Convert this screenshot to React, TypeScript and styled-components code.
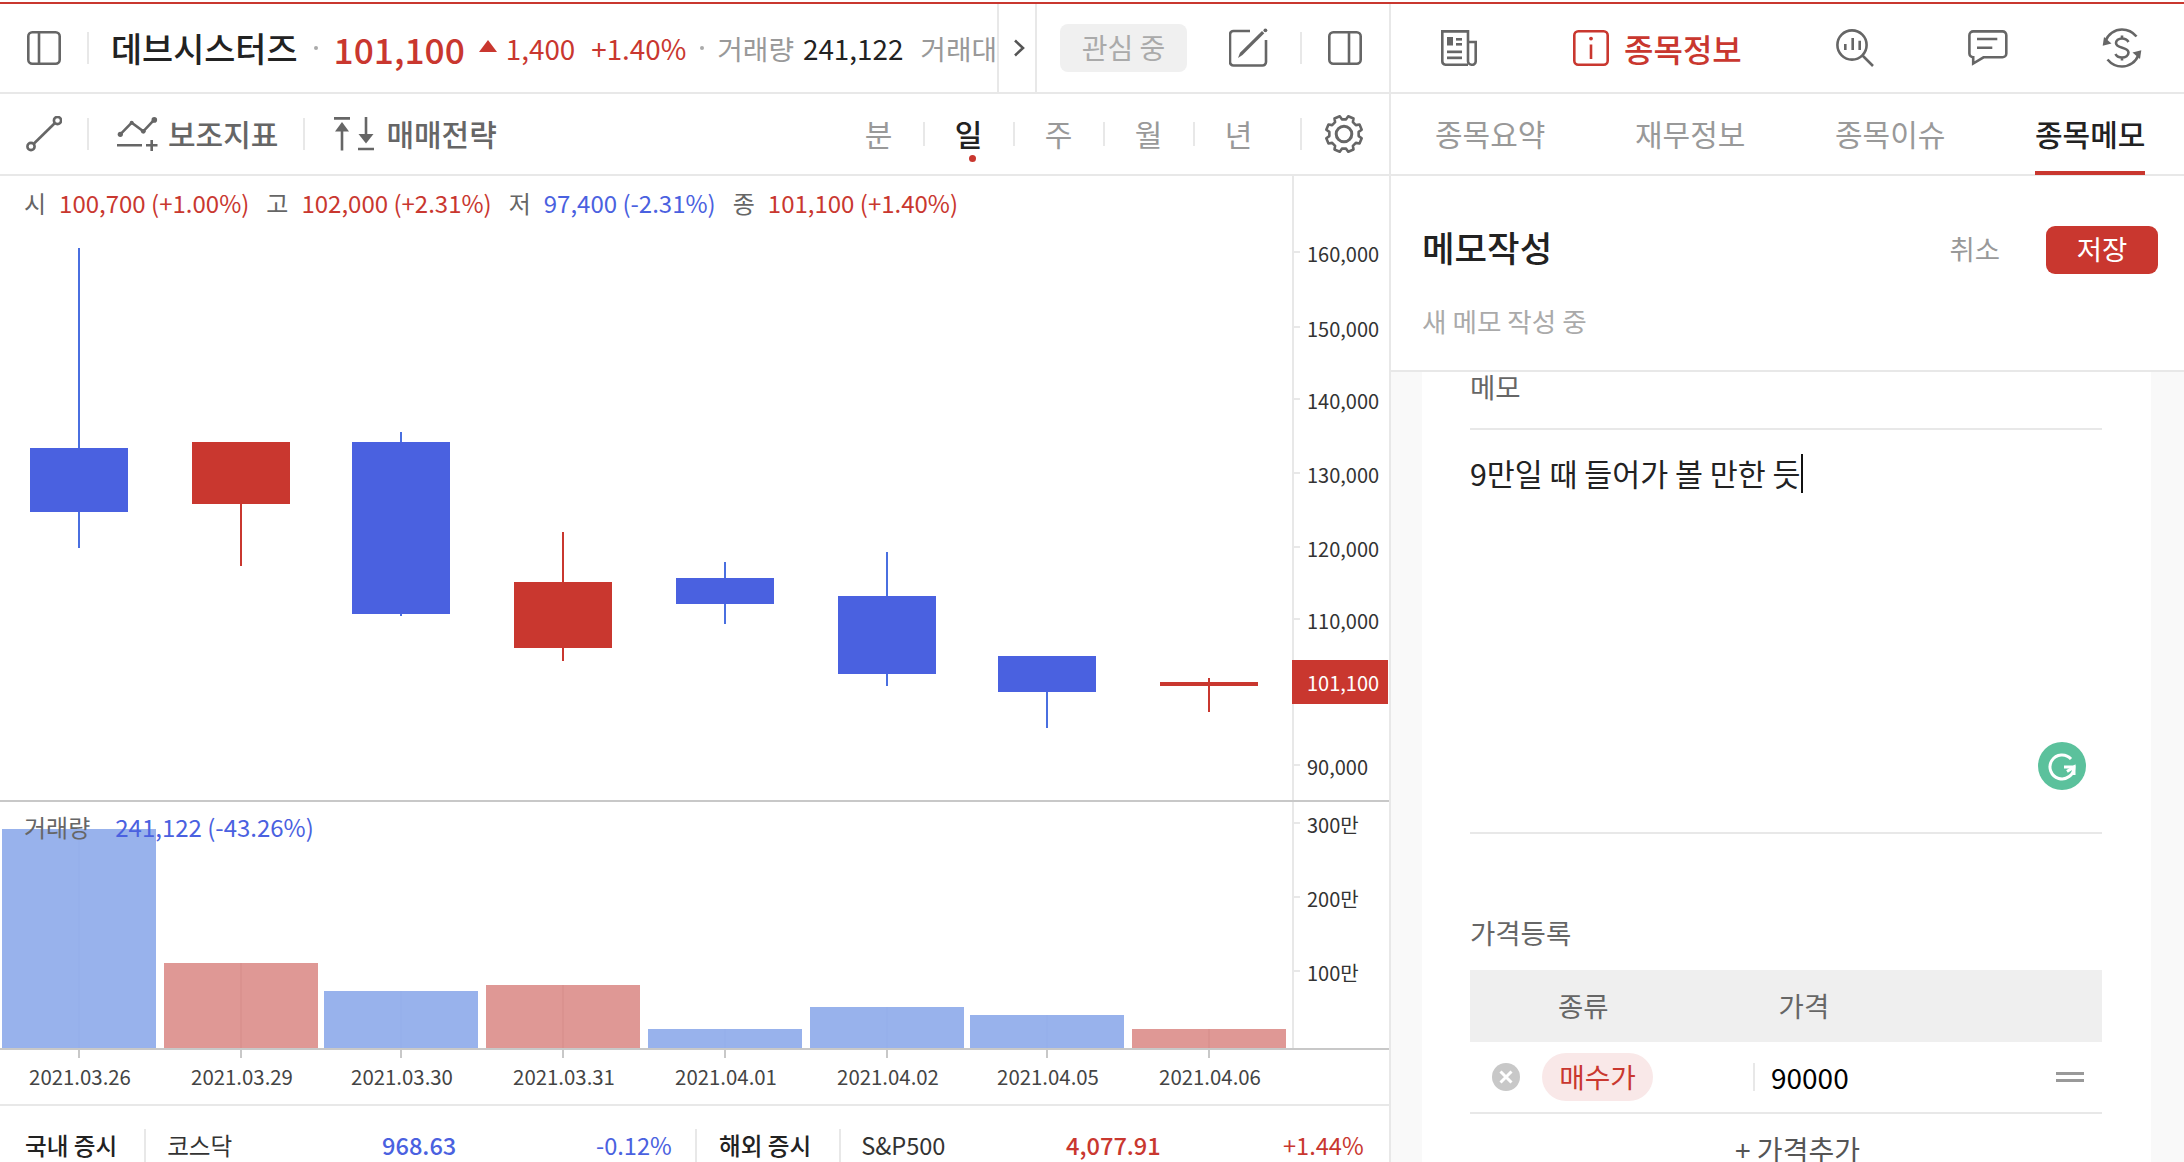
import React from 'react';
import styled, { createGlobalStyle } from 'styled-components';

const RED = '#c9372f';
const BLUE = '#4a61e0';
const LINE = '#e8e8e8';
const ICON = '#666';

const Global = createGlobalStyle`
  html, body { margin: 0; padding: 0; background: #fff; }
  body { font-family: "Noto Sans CJK KR", "Noto Sans", sans-serif; color: #222; }
  * { box-sizing: border-box; }
`;

const Page = styled.div`
  width: 2184px; height: 1162px; overflow: hidden; display: flex; flex-direction: column; padding-top: 2px; background: #fff;
`;
const RedStrip = styled.div`height: 2px; background: ${RED}; flex: none;`;
const Body = styled.div`flex: 1; display: flex; min-height: 0;`;
const LeftPanel = styled.section`
  width: 1391px; flex: none; border-right: 2px solid ${LINE}; display: flex; flex-direction: column;
`;
const RightPanel = styled.section`flex: 1; display: flex; flex-direction: column; min-width: 0;`;

const Bar = styled.div<{ $h: number }>`
  height: ${p => p.$h}px; flex: none; display: flex; align-items: center; border-bottom: 2px solid ${LINE};
`;
const VLine = styled.span<{ $ml?: number; $h?: number }>`
  flex: none; width: 2px; height: ${p => p.$h ?? 32}px; background: ${LINE}; margin-left: ${p => p.$ml ?? 0}px;
`;
const IconSvg = styled.svg<{ $ml?: number; $mr?: number; $c?: string }>`
  flex: none; display: block; margin-left: ${p => p.$ml ?? 0}px; margin-right: ${p => p.$mr ?? 0}px; fill: none;
  stroke: ${p => p.$c ?? ICON}; stroke-width: 2.6;
`;

/* ticker */
const Ticker = styled.div`
  width: 997px; height: 100%; flex: none; display: flex; align-items: center; overflow: hidden; white-space: nowrap;
`;
const StockName = styled.span`font-size: 33.8px; font-weight: 500; color: #222; margin-left: 22px; margin-top: -2px;`;
const Dot = styled.span<{ $ml: number }>`
  flex: none; width: 4px; height: 4px; border-radius: 50%; background: #aaa; margin-left: ${p => p.$ml}px;
`;
const Price = styled.span`font-size: 35.3px; font-weight: 500; color: ${RED}; margin-left: 16px;`;
const Tri = styled.span`
  flex: none; width: 0; height: 0; margin-left: 14px; margin-top: -4px;
  border-left: 9px solid transparent; border-right: 9px solid transparent; border-bottom: 12px solid ${RED};
`;
const TickerVal = styled.span<{ $ml: number; $c: string }>`
  font-size: 27.8px; color: ${p => p.$c}; margin-left: ${p => p.$ml}px;
`;
const ChevronCell = styled.div`
  width: 40px; height: 100%; flex: none; display: flex; align-items: center; justify-content: center; padding-left: 4px;
  border-left: 2px solid ${LINE}; border-right: 2px solid ${LINE};
`;
const WatchButton = styled.button`
  flex: none; width: 127px; height: 48px; margin-left: 23px; border: 0; border-radius: 8px; background: #f0f0f0;
  color: #aaa; font: inherit; font-size: 28px; padding: 0 0 2px; display: flex; align-items: center; justify-content: center;
`;

/* toolbar */
const ToolLabel = styled.span<{ $ml: number }>`
  font-size: 30px; font-weight: 500; color: #666; margin-left: ${p => p.$ml}px; margin-top: -2px; white-space: nowrap;
`;
const Periods = styled.div`display: flex; align-items: center; margin-left: auto;`;
const Period = styled.div<{ $on?: boolean; $last?: boolean }>`
  position: relative; width: 90px; height: 40px; display: flex; align-items: center; justify-content: center;
  font-size: 30px; padding-bottom: 2px; font-weight: ${p => (p.$on ? 500 : 400)}; color: ${p => (p.$on ? '#222' : '#999')};
  &::before {
    content: ''; display: ${p => (p.$last ? 'none' : 'block')}; position: absolute; right: -1px; top: 8px; width: 2px; height: 24px; background: ${LINE};
  }
  &::after {
    content: ''; display: ${p => (p.$on ? 'block' : 'none')}; position: absolute; left: 45px; bottom: -8px; width: 7px; height: 7px; border-radius: 50%; background: ${RED};
  }
`;

/* chart */
const ChartArea = styled.div`position: relative; flex: none; height: 930px;`;
const ChartSvg = styled.svg`
  display: block; font-family: "Noto Sans CJK KR", "Noto Sans", sans-serif;
`;
const Legend = styled.div<{ $top: number }>`
  position: absolute; left: 24px; top: ${p => p.$top}px; display: flex; align-items: center; height: 32px; font-size: 24px; white-space: nowrap;
`;
const LegendKey = styled.span<{ $ml?: number }>`color: #666; margin-left: ${p => p.$ml ?? 0}px;`;
const LegendVal = styled.span<{ $c: string; $ml?: number }>`color: ${p => p.$c}; margin-left: ${p => p.$ml ?? 13}px;`;

/* index footer */
const Footer = styled.div`
  flex: 1; position: relative; display: flex; align-items: flex-start; padding-top: 23px; font-size: 23.6px; line-height: 33px; white-space: nowrap; min-height: 0; overflow: hidden;
`;
const MarketCell = styled.div<{ $w: number }>`
  width: ${p => p.$w}px; flex: none; display: flex; align-items: center; height: 33px; position: relative;
`;
const MarketTitle = styled.span<{ $ml: number }>`font-weight: 500; color: #222; margin-left: ${p => p.$ml}px;`;
const MarketName = styled.span<{ $ml: number }>`color: #333; margin-left: ${p => p.$ml}px;`;
const MarketVal = styled.span<{ $c: string; $x: number; $b?: boolean }>`
  position: absolute; left: ${p => p.$x}px; color: ${p => p.$c}; font-weight: ${p => (p.$b ? 500 : 400)};
`;
const FootLine = styled.span<{ $x: number }>`
  position: absolute; left: ${p => p.$x}px; top: 0; bottom: -40px; width: 2px; background: ${LINE};
`;

/* right */
const MainTabs = styled.div`display: flex; align-items: center; gap: 94px; padding-left: 50px; height: 100%; width: 100%;`;
const ActiveMain = styled.div`display: flex; align-items: center; gap: 15px; color: ${RED}; font-size: 32px; font-weight: 500;`;
const SubTabs = styled.div`display: flex; gap: 89.6px; padding-left: 44px; height: 100%; width: 100%;`;
const SubTab = styled.div<{ $on?: boolean }>`
  position: relative; height: 100%; display: flex; align-items: center; font-size: 30px; padding-bottom: 2px; font-weight: ${p => (p.$on ? 500 : 400)};
  color: ${p => (p.$on ? '#222' : '#999')};
  &::after {
    content: ''; display: ${p => (p.$on ? 'block' : 'none')}; position: absolute; left: 0; right: 0; bottom: -1px; height: 4px; background: ${RED};
  }
`;
const MemoHead = styled.header`
  height: 196px; flex: none; border-bottom: 2px solid ${LINE}; padding: 48px 26px 0 31px; display: flex; flex-direction: column;
`;
const MemoTop = styled.div`display: flex; align-items: center; height: 52px;`;
const MemoTitle = styled.h2`margin: -8px 0 0; font-size: 35.4px; font-weight: 500; color: #222;`;
const CancelBtn = styled.button`
  margin-left: auto; border: 0; background: none; padding: 0 0 5px; font: inherit; font-size: 27.5px; color: #999;
`;
const SaveBtn = styled.button`
  margin-left: 46px; width: 112px; height: 48px; border: 0; border-radius: 9px; background: ${RED}; color: #fff;
  font: inherit; font-size: 27.5px; padding: 0 0 4px;
`;
const MemoSub = styled.div`margin-top: 27px; font-size: 26.6px; color: #aaa; line-height: 36px;`;
const Gutter = styled.div`flex: 1; min-height: 0; background: #f9f9f9; padding: 0 33px 0 31px; display: flex; position: relative;`;
const Card = styled.div`flex: 1; background: #fff; padding: 0 49px 0 48px; overflow: hidden;`;
const FieldLabel = styled.div`font-size: 27.5px; line-height: 30px; color: #666; margin-top: -1px;`;
const MemoLabelRow = styled.div`height: 58px; border-bottom: 2px solid ${LINE}; padding-top: 0.1px;`;
const EditBox = styled.div`
  position: relative; height: 404px; padding-top: 23px; border-bottom: 2px solid ${LINE}; font-size: 30.4px; line-height: 40px; color: #222; white-space: nowrap;
`;
const Caret = styled.span`
  display: inline-block; width: 2px; height: 39px; margin-top: 1px; background: #111; vertical-align: top;
`;
const GrammarlyBadge = styled.svg`position: absolute; right: 16px; bottom: 42px; display: block;`;
const PriceSection = styled.div`margin-top: 84px; padding-top: 0.1px;`;
const PriceHead = styled.div`
  margin-top: 23px; height: 72px; background: #efefef; display: flex; align-items: center; padding-bottom: 2px; font-size: 27.5px; color: #666;
`;
const HeadCell = styled.span<{ $ml: number }>`margin-left: ${p => p.$ml}px;`;
const PriceRow = styled.div`height: 72px; display: flex; align-items: center; border-bottom: 2px solid ${LINE};`;
const KindPill = styled.span`
  flex: none; width: 111px; height: 48px; margin-left: 22px; border-radius: 24px; background: #f9e8e8; color: ${RED};
  display: flex; align-items: center; justify-content: center; padding-bottom: 2px; font-size: 27.8px;
`;
const PriceValue = styled.span`margin-left: 16px; font-size: 28px; color: #000;`;
const DragHandle = styled.span`
  margin-left: auto; margin-right: 18px; width: 28px; height: 10px; border-top: 3px solid #999; border-bottom: 3px solid #999; flex: none;
`;
const AddPrice = styled.div`height: 70px; display: flex; align-items: center; justify-content: center; padding-left: 23px; font-size: 28px; color: #555;`;

/* icons */
const PanelIcon = ({ split, ml }: { split: number; ml?: number }) => (
  <IconSvg $ml={ml} width={34} height={34} viewBox="0 0 34 34">
    <rect x="1.3" y="1.3" width="31.4" height="31.4" rx="4" />
    <path d={`M${split} 1.3V32.7`} />
  </IconSvg>
);
const LineToolIcon = () => (
  <IconSvg $ml={26} width={36} height={36} viewBox="0 0 36 36">
    <circle cx="5" cy="30.5" r="3.6" />
    <circle cx="31.5" cy="4.5" r="3.6" />
    <path d="M8 27.5 28.7 7.2" />
  </IconSvg>
);
const IndicatorIcon = () => (
  <IconSvg $ml={28} width={41} height={34} viewBox="0 0 41 34">
    <path d="M3.3 17.3 14.7 5.7 26.3 14.3 37.3 2.7" />
    <circle cx="3.3" cy="17.3" r="2.6" fill={ICON} stroke="none" />
    <circle cx="26.3" cy="14.3" r="2.4" fill={ICON} stroke="none" />
    <circle cx="37.3" cy="2.9" r="2.8" fill={ICON} stroke="none" />
    <circle cx="14.7" cy="5.7" r="2" fill={ICON} stroke="none" />
    <path d="M0 28.3H25M29 28.3H40.5M34.7 23V34" />
  </IconSvg>
);
const StrategyIcon = () => (
  <IconSvg $ml={29} width={40} height={34} viewBox="0 0 40 34">
    <path d="M0 1.4H16M8 14V33.5M32 0V18M24 32H40" />
    <path d="M1 14.5H15L8 5Z" fill={ICON} stroke="none" />
    <path d="M24.5 17H39.5L32 26.5Z" fill={ICON} stroke="none" />
  </IconSvg>
);
const PencilIcon = () => (
  <IconSvg $ml={42} width={40} height={40} viewBox="0 0 40 40">
    <path d="M21 3H4.5A3.5 3.5 0 0 0 1 6.5V34A3.5 3.5 0 0 0 4.5 37.5H33.5A3.5 3.5 0 0 0 37 34V12" />
    <path d="M9 30 11 24.7 33 3 35.3 5.2 13.5 27Z" fill={ICON} stroke="none" />
    <circle cx="36.4" cy="2.3" r="1.9" fill={ICON} stroke="none" />
  </IconSvg>
);
const NewsIcon = () => (
  <IconSvg $mr={2} width={36} height={36} viewBox="0 0 36 36">
    <path d="M27 34.7H4.5A3.5 3.5 0 0 1 1.3 31.2V1.4H27V31.2A3.5 3.5 0 0 0 30.5 34.7 3.5 3.5 0 0 0 34.7 31.2V12H27" />
    <g fill={ICON} stroke="none">
      <rect x="6" y="7" width="6" height="8.5" />
      <rect x="15" y="8" width="6" height="2.6" />
      <rect x="15" y="13" width="6" height="2.6" />
      <rect x="6" y="20.5" width="15" height="2.7" />
      <rect x="6" y="26.5" width="15" height="2.7" />
    </g>
  </IconSvg>
);
const InfoIcon = () => (
  <IconSvg $c={RED} width={36} height={36} viewBox="0 0 36 36">
    <rect x="1.3" y="1.3" width="33.4" height="33.4" rx="4" />
    <path d="M18 14.5V29" />
    <circle cx="18" cy="8.6" r="1.9" fill={RED} stroke="none" />
  </IconSvg>
);
const SearchChartIcon = () => (
  <IconSvg width={38} height={38} viewBox="0 0 38 38">
    <circle cx="16" cy="16" r="14.6" />
    <path d="M26.5 26.5 37 37M9.3 15V21M16.7 9V21M23.7 11.7V21" />
  </IconSvg>
);
const ChatIcon = () => (
  <IconSvg width={40} height={36} viewBox="0 0 40 36">
    <path d="M5.5 1.4H34.5A3.8 3.8 0 0 1 38.3 5.2V23.5A3.8 3.8 0 0 1 34.5 27.3H15.5L5.2 33.5V27.3A3.8 3.8 0 0 1 1.4 23.5V5.2A3.8 3.8 0 0 1 5.5 1.4Z" />
    <path d="M9 9H29.3M9 17.7H24.3" />
  </IconSvg>
);
const DollarIcon = () => (
  <IconSvg width={40} height={40} viewBox="0 0 40 40">
    <path d="M3.5 13C6 6.3 12.5 1.5 20 1.5 26 1.5 31 4.3 34.5 8.5" />
    <path d="M36.5 27C34 33.7 27.5 38.5 20 38.5 14 38.5 9 35.7 5.5 31.5" />
    <path d="M0.7 17.7 9.5 15.5 2 9Z" fill={ICON} stroke="none" />
    <path d="M39.3 22.3 30.5 24.5 38 31Z" fill={ICON} stroke="none" />
    <path d="M26.5 14C25 11.5 23 10.5 20 10.5 16.5 10.5 14 12.5 14 15 14 21 26.5 18.5 26.5 24.5 26.5 27.5 23.5 29.5 20 29.5 17 29.5 14.5 28.3 13.5 26M20 7.5V10.5M20 29.5V32.5" />
  </IconSvg>
);
const gearPath = (() => {
  const pts: string[] = [];
  const n = 8;
  const cx = 20, cy = 20, ro = 18.2, ri = 14.8;
  for (let i = 0; i < n; i++) {
    const a = (i / n) * Math.PI * 2 + Math.PI / 8;
    const step = (Math.PI * 2) / n;
    const p = (r: number, t: number) => `${(cx + r * Math.cos(t)).toFixed(2)} ${(cy + r * Math.sin(t)).toFixed(2)}`;
    pts.push(p(ri, a - step * 0.32), p(ro, a - step * 0.2), p(ro, a + step * 0.2), p(ri, a + step * 0.32));
  }
  return 'M' + pts.join('L') + 'Z';
})();
const GearIcon = () => (
  <IconSvg $ml={22} $mr={25} width={40} height={40} viewBox="0 0 40 40">
    <path d={gearPath} strokeLinejoin="round" />
    <circle cx="20" cy="20" r="7.8" strokeWidth="3" />
  </IconSvg>
);
const ClearIcon = () => (
  <IconSvg $ml={22} $c="#fff" width={28} height={28} viewBox="0 0 28 28">
    <circle cx="14" cy="14" r="14" fill="#c8c8c8" stroke="none" />
    <path d="M8.5 8.5 19.5 19.5M19.5 8.5 8.5 19.5" strokeWidth="3" />
  </IconSvg>
);

/* chart data */
const candles = [
  { x: 79, t: 448, b: 512, wt: 248, wb: 548, up: false },
  { x: 241, t: 442, b: 504, wt: 442, wb: 566, up: true },
  { x: 401, t: 442, b: 614, wt: 432, wb: 616, up: false },
  { x: 563, t: 582, b: 648, wt: 532, wb: 661, up: true },
  { x: 725, t: 578, b: 604, wt: 562, wb: 624, up: false },
  { x: 887, t: 596, b: 674, wt: 552, wb: 686, up: false },
  { x: 1047, t: 656, b: 692, wt: 656, wb: 728, up: false },
  { x: 1209, t: 682, b: 686, wt: 678, wb: 712, up: true },
];
const volumes = [
  { x: 79, t: 829, up: false, d: '2021.03.26' },
  { x: 241, t: 963, up: true, d: '2021.03.29' },
  { x: 401, t: 991, up: false, d: '2021.03.30' },
  { x: 563, t: 985, up: true, d: '2021.03.31' },
  { x: 725, t: 1029, up: false, d: '2021.04.01' },
  { x: 887, t: 1007, up: false, d: '2021.04.02' },
  { x: 1047, t: 1015, up: false, d: '2021.04.05' },
  { x: 1209, t: 1029, up: true, d: '2021.04.06' },
];
const priceTicks = [
  { y: 252, l: '160,000' }, { y: 327, l: '150,000' }, { y: 399, l: '140,000' }, { y: 473, l: '130,000' },
  { y: 547, l: '120,000' }, { y: 619, l: '110,000' }, { y: 765, l: '90,000' },
];
const volTicks = [{ y: 823, l: '300만' }, { y: 897, l: '200만' }, { y: 971, l: '100만' }];

const Chart = () => (
  <ChartSvg width={1389} height={930} viewBox="0 176 1389 930">
    {volumes.map(v => (
      <g key={v.d}>
        <rect x={v.x - 77} y={v.t} width={154} height={1048 - v.t} fill={v.up ? '#df9895' : '#98b2ec'} />
        <rect x={v.x - 0.5} y={v.t} width={1} height={1048 - v.t} fill={v.up ? '#d68c89' : '#93adea'} />
        <rect x={v.x - 1} y={1050} width={2} height={8} fill="#c8c8c8" />
        <text x={v.x + 1} y={1076} fontSize={20.4} fill="#444" textAnchor="middle" dominantBaseline="central">{v.d}</text>
      </g>
    ))}
    {candles.map(c => (
      <g key={c.x}>
        <rect x={c.x - 1} y={c.wt} width={2} height={c.wb - c.wt} fill={c.up ? RED : '#4a6fe0'} />
        <rect x={c.x - 49} y={c.t} width={98} height={c.b - c.t} fill={c.up ? RED : BLUE} />
      </g>
    ))}
    <rect x={1292} y={176} width={2} height={872} fill={LINE} />
    {priceTicks.concat(volTicks).map(t => (
      <g key={t.l}>
        <rect x={1294} y={t.y - 1} width={6} height={2} fill={LINE} />
        <text x={1307} y={t.y + 1} fontSize={20} fill="#333" dominantBaseline="central">{t.l}</text>
      </g>
    ))}
    <rect x={1292} y={660} width={96} height={44} fill={RED} />
    <text x={1307} y={682} fontSize={20} fill="#fff" dominantBaseline="central">101,100</text>
    <rect x={0} y={800} width={1389} height={2} fill="#c8c8c8" />
    <rect x={0} y={1048} width={1389} height={2} fill="#c8c8c8" />
    <rect x={0} y={1104} width={1389} height={2} fill={LINE} />
  </ChartSvg>
);

export default function App() {
  return (
    <>
      <Global />
      <Page>
        <RedStrip />
        <Body>
          <LeftPanel>
            <Bar $h={90}>
              <Ticker>
                <PanelIcon split={12} ml={27} />
                <VLine $ml={26} />
                <StockName>데브시스터즈</StockName>
                <Dot $ml={16} />
                <Price>101,100</Price>
                <Tri />
                <TickerVal $ml={9} $c={RED}>1,400</TickerVal>
                <TickerVal $ml={16} $c={RED}>+1.40%</TickerVal>
                <Dot $ml={14} />
                <TickerVal $ml={13} $c="#999">거래량</TickerVal>
                <TickerVal $ml={9} $c="#222">241,122</TickerVal>
                <TickerVal $ml={17} $c="#999">거래대금</TickerVal>
              </Ticker>
              <ChevronCell>
                <svg width="12" height="18" viewBox="0 0 12 18" fill="none" stroke="#555" strokeWidth="2.6">
                  <path d="M2 1.5 10 9 2 16.5" />
                </svg>
              </ChevronCell>
              <WatchButton>관심 중</WatchButton>
              <PencilIcon />
              <VLine $ml={31} />
              <PanelIcon split={21} ml={26} />
            </Bar>
            <Bar $h={82}>
              <LineToolIcon />
              <VLine $ml={25} />
              <IndicatorIcon />
              <ToolLabel $ml={10}>보조지표</ToolLabel>
              <VLine $ml={25} />
              <StrategyIcon />
              <ToolLabel $ml={12}>매매전략</ToolLabel>
              <Periods>
                <Period>분</Period>
                <Period $on>일</Period>
                <Period>주</Period>
                <Period>월</Period>
                <Period $last>년</Period>
                <VLine $ml={16.5} />
                <GearIcon />
              </Periods>
            </Bar>
            <ChartArea>
              <Chart />
              <Legend $top={10}>
                <LegendKey>시</LegendKey>
                <LegendVal $c={RED}>100,700 (+1.00%)</LegendVal>
                <LegendKey $ml={17}>고</LegendKey>
                <LegendVal $c={RED}>102,000 (+2.31%)</LegendVal>
                <LegendKey $ml={17}>저</LegendKey>
                <LegendVal $c={BLUE}>97,400 (-2.31%)</LegendVal>
                <LegendKey $ml={17}>종</LegendKey>
                <LegendVal $c={RED}>101,100 (+1.40%)</LegendVal>
              </Legend>
              <Legend $top={634}>
                <LegendKey>거래량</LegendKey>
                <LegendVal $c={BLUE} $ml={25}>241,122 (-43.26%)</LegendVal>
              </Legend>
            </ChartArea>
            <Footer>
              <MarketCell $w={695}>
                <MarketTitle $ml={25}>국내 증시</MarketTitle>
                <FootLine $x={144} />
                <MarketName $ml={50}>코스닥</MarketName>
                <MarketVal $c={BLUE} $x={382} $b>968.63</MarketVal>
                <MarketVal $c={BLUE} $x={596}>-0.12%</MarketVal>
                <FootLine $x={695} />
              </MarketCell>
              <MarketCell $w={694}>
                <MarketTitle $ml={24}>해외 증시</MarketTitle>
                <FootLine $x={144} />
                <MarketName $ml={50}>S&amp;P500</MarketName>
                <MarketVal $c={RED} $x={371} $b>4,077.91</MarketVal>
                <MarketVal $c={RED} $x={588}>+1.44%</MarketVal>
              </MarketCell>
            </Footer>
          </LeftPanel>
          <RightPanel>
            <Bar $h={90}>
              <MainTabs>
                <NewsIcon />
                <ActiveMain><InfoIcon />종목정보</ActiveMain>
                <SearchChartIcon />
                <ChatIcon />
                <DollarIcon />
              </MainTabs>
            </Bar>
            <Bar $h={82}>
              <SubTabs>
                <SubTab>종목요약</SubTab>
                <SubTab>재무정보</SubTab>
                <SubTab>종목이슈</SubTab>
                <SubTab $on>종목메모</SubTab>
              </SubTabs>
            </Bar>
            <MemoHead>
              <MemoTop>
                <MemoTitle>메모작성</MemoTitle>
                <CancelBtn>취소</CancelBtn>
                <SaveBtn>저장</SaveBtn>
              </MemoTop>
              <MemoSub>새 메모 작성 중</MemoSub>
            </MemoHead>
            <Gutter>
              <Card>
                <MemoLabelRow><FieldLabel>메모</FieldLabel></MemoLabelRow>
                <EditBox>
                  9만일 때 들어가 볼 만한 듯<Caret />
                  <GrammarlyBadge width={48} height={48} viewBox="0 0 48 48" fill="none">
                    <circle cx="24" cy="24" r="24" fill="#5bc19c" />
                    <path d="M33 17A12 12 0 1 0 36 25H26" stroke="#fff" strokeWidth="3" />
                    <path d="M29 29.5 36 25V33" stroke="#fff" strokeWidth="3" />
                  </GrammarlyBadge>
                </EditBox>
                <PriceSection>
                  <FieldLabel>가격등록</FieldLabel>
                  <PriceHead>
                    <HeadCell $ml={88}>종류</HeadCell>
                    <HeadCell $ml={170}>가격</HeadCell>
                  </PriceHead>
                  <PriceRow>
                    <ClearIcon />
                    <KindPill>매수가</KindPill>
                    <VLine $ml={100} $h={28} />
                    <PriceValue>90000</PriceValue>
                    <DragHandle />
                  </PriceRow>
                  <AddPrice>+ 가격추가</AddPrice>
                </PriceSection>
              </Card>
            </Gutter>
          </RightPanel>
        </Body>
      </Page>
    </>
  );
}
